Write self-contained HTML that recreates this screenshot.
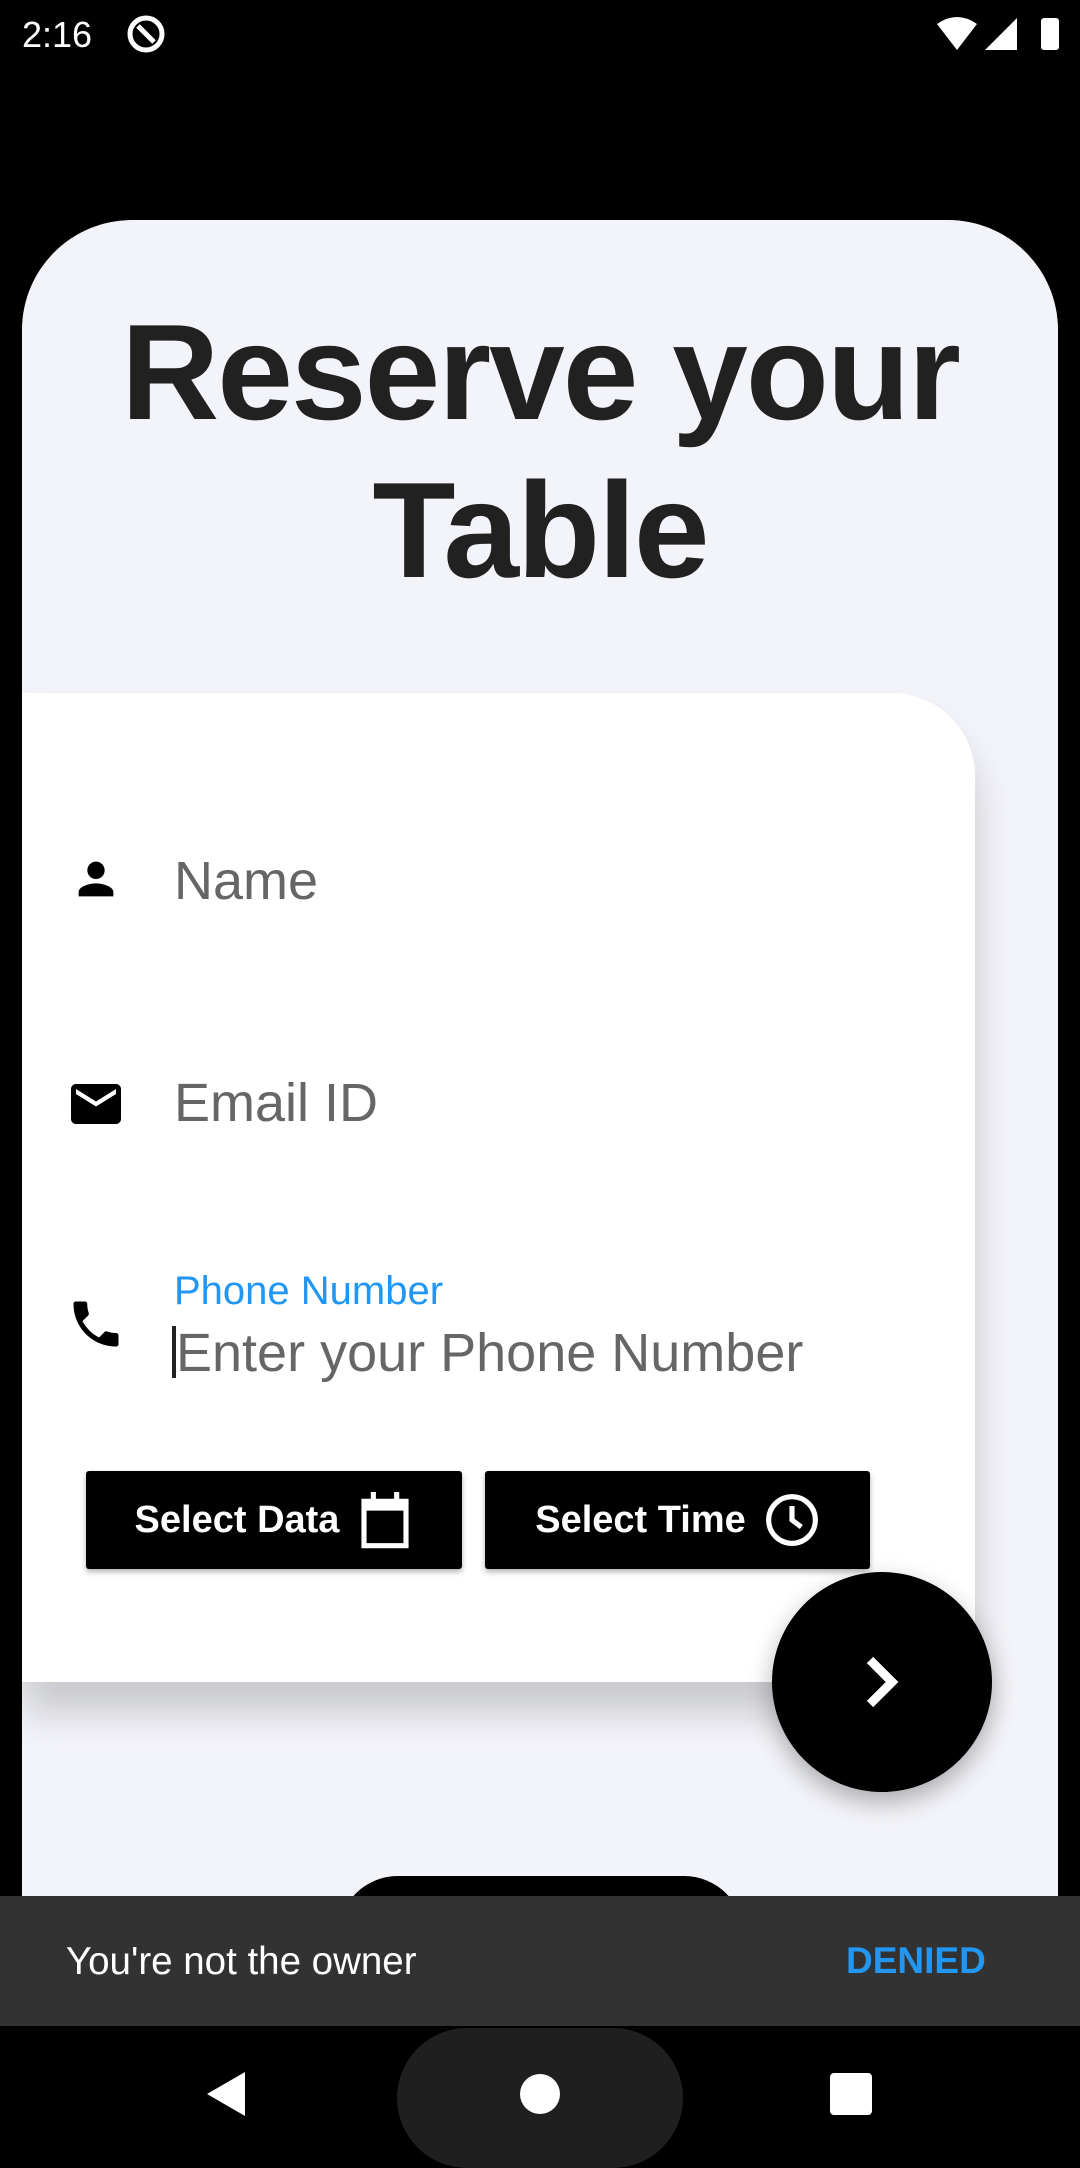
<!DOCTYPE html>
<html><head><meta charset="utf-8"><style>
*{margin:0;padding:0;box-sizing:border-box}
body{width:1080px;height:2160px;background:#000;position:relative;overflow:hidden;font-family:"Liberation Sans",Roboto,sans-serif}
.abs{position:absolute}
.card{left:22px;top:220px;width:1036px;height:1700px;background:#f3f4f9;border-radius:110px 110px 0 0}
.title{left:0;width:1080px;top:293px;text-align:center;font-weight:bold;font-size:136px;line-height:158px;color:#212121;letter-spacing:-2px}
.form{left:22px;top:693px;width:953px;height:989px;background:#fff;border-radius:0 83px 0 0;box-shadow:0 30px 40px rgba(0,0,0,0.18)}
.lbl{font-size:54px;color:#666;left:174px}
.btn{background:#000;color:#fff;font-weight:bold;font-size:38px;height:98px;top:1471px;display:flex;align-items:center;justify-content:center;gap:18px;border-radius:3px;box-shadow:0 3px 6px rgba(0,0,0,.3)}
</style></head><body>
<div class="abs" style="left:22px;top:14px;color:#fff;font-size:36px">2:16</div>
<svg class="abs" style="left:126px;top:14px" width="40" height="40" viewBox="0 0 40 40"><circle cx="20" cy="20" r="16" fill="none" stroke="#fff" stroke-width="5"/><path d="M12 12 L28 28" stroke="#fff" stroke-width="5"/></svg>
<svg class="abs" style="left:935px;top:14px" width="130" height="40" viewBox="0 0 130 40"><path d="M2 10 Q22 -4 42 10 L22 36Z" fill="#fff"/><path d="M50 36 L82 4 L82 36Z" fill="#fff"/><rect x="106" y="4" width="18" height="32" rx="3" fill="#fff"/></svg>
<div class="abs card"></div>
<div class="abs title">Reserve your<br>Table</div>
<div class="abs" style="left:338px;top:1876px;width:406px;height:80px;background:#000;border-radius:60px 60px 0 0"></div>
<div class="abs form"></div>
<svg class="abs" style="left:70px;top:853px" width="52" height="52" viewBox="0 0 24 24"><path d="M12 12c2.2 0 4-1.8 4-4s-1.8-4-4-4-4 1.8-4 4 1.8 4 4 4zm0 2c-2.7 0-8 1.3-8 4v2h16v-2c0-2.7-5.3-4-8-4z"/></svg>
<div class="abs lbl" style="top:850px">Name</div>
<svg class="abs" style="left:66px;top:1074px" width="60" height="60" viewBox="0 0 24 24"><path d="M20 4H4c-1.1 0-2 .9-2 2v12c0 1.1.9 2 2 2h16c1.1 0 2-.9 2-2V6c0-1.1-.9-2-2-2zm0 4l-8 5-8-5V6l8 5 8-5v2z"/></svg>
<div class="abs lbl" style="top:1072px">Email ID</div>
<svg class="abs" style="left:66px;top:1294px" width="60" height="60" viewBox="0 0 24 24"><path d="M6.6 10.8c1.4 2.8 3.8 5.1 6.6 6.6l2.2-2.2c.3-.3.7-.4 1-.2 1.1.4 2.3.6 3.6.6.6 0 1 .4 1 1V20c0 .6-.4 1-1 1C10.6 21 3 13.4 3 4c0-.6.4-1 1-1h3.5c.6 0 1 .4 1 1 0 1.3.2 2.5.6 3.6.1.3 0 .7-.2 1L6.6 10.8z"/></svg>
<div class="abs" style="left:174px;top:1269px;font-size:40px;color:#2196f3">Phone Number</div>
<div class="abs" style="left:172px;top:1326px;width:4px;height:52px;background:#222"></div>
<div class="abs lbl" style="top:1322px;left:176px">Enter your Phone Number</div>
<div class="abs btn" style="left:86px;width:376px">Select Data <svg width="56" height="62" viewBox="0 0 24 26"><path d="M3 5h18v19H3z" fill="none" stroke="#fff" stroke-width="2.2"/><path d="M3 5h18v4H3z" fill="#fff"/><path d="M7 1v5M17 1v5" stroke="#fff" stroke-width="2.2"/></svg></div>
<div class="abs btn" style="left:485px;width:385px">Select Time <svg width="56" height="56" viewBox="0 0 24 24"><circle cx="12" cy="12" r="10" fill="none" stroke="#fff" stroke-width="2.2"/><path d="M12 6v6l4 3" fill="none" stroke="#fff" stroke-width="2.2"/></svg></div>
<div class="abs" style="left:772px;top:1572px;width:220px;height:220px;border-radius:50%;background:#000;box-shadow:0 10px 25px rgba(0,0,0,.3)"></div>
<svg class="abs" style="left:852px;top:1652px" width="60" height="60" viewBox="0 0 60 60"><path d="M18 8 L40 30 L18 52" fill="none" stroke="#fff" stroke-width="9"/></svg>
<div class="abs" style="left:0;top:1896px;width:1080px;height:130px;background:#323232"></div>
<div class="abs" style="left:66px;top:1940px;font-size:38.5px;color:#fff">You're not the owner</div>
<div class="abs" style="left:846px;top:1940px;font-size:37px;color:#2196f3;font-weight:bold">DENIED</div>
<div class="abs" style="left:397px;top:2028px;width:286px;height:140px;border-radius:70px;background:#1f1f1f"></div>
<svg class="abs" style="left:205px;top:2070px" width="44" height="48" viewBox="0 0 44 48"><path d="M40 2 L40 46 L2 24Z" fill="#fff"/></svg>
<div class="abs" style="left:520px;top:2074px;width:40px;height:40px;border-radius:50%;background:#fff"></div>
<div class="abs" style="left:830px;top:2073px;width:42px;height:42px;border-radius:4px;background:#fff"></div>
</body></html>
